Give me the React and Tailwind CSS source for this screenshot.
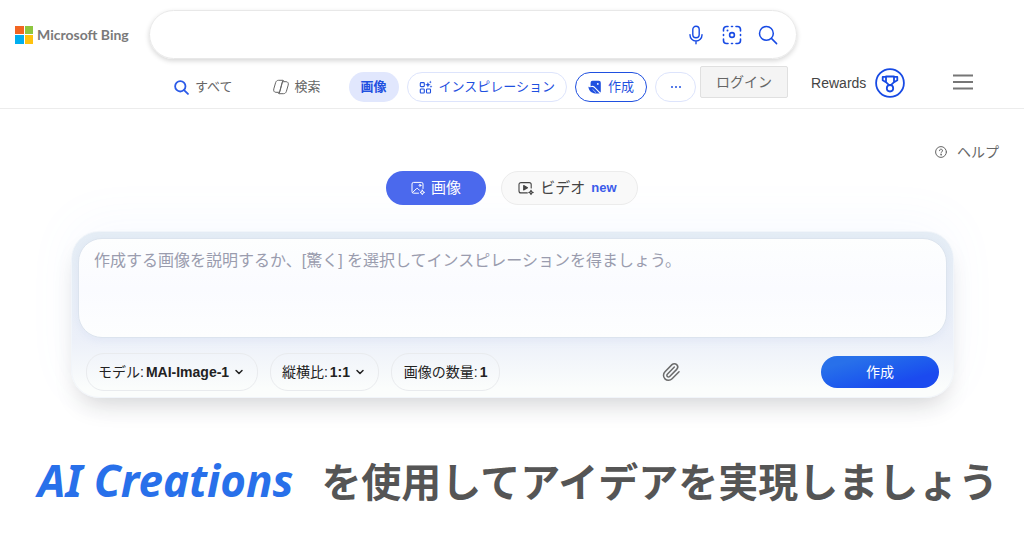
import React from 'react';
import { ChevronDown, Paperclip } from 'lucide-react';

const SearchIcon = ({ className, strokeWidth }) => (
  <svg className={className} viewBox="0 0 20 20" fill="none" stroke="currentColor" strokeWidth={strokeWidth} strokeLinecap="round">
    <circle cx="8.4" cy="8.4" r="6.9" />
    <path d="M13.4 13.4l5.2 5.2" />
  </svg>
);

const MicIcon = () => (
  <svg className="w-5 h-5" viewBox="0 0 20 20" fill="none" stroke="currentColor" strokeWidth="1.4" strokeLinecap="round">
    <rect x="6.8" y="1.2" width="6.4" height="11.6" rx="3.2" />
    <path d="M4 9.6v.4a6 6 0 0 0 12 0v-.4M10 16v2.8" />
  </svg>
);

const LensIcon = () => (
  <svg className="w-5 h-5" viewBox="0 0 20 20" fill="none" stroke="currentColor" strokeWidth="1.6" strokeLinecap="round">
    <path d="M1.5 6V4.5a3 3 0 0 1 3-3H6M14 1.5h1.5a3 3 0 0 1 3 3V6M18.5 14v1.5a3 3 0 0 1-3 3H14M6 18.5H4.5a3 3 0 0 1-3-3V14" />
    <path d="M9.5 1.5h1M1.5 9.5v1M18.5 9.5v1M9.5 18.5h1" />
    <circle cx="10" cy="10" r="2.4" />
    <circle cx="5.5" cy="5.5" r="1" fill="currentColor" stroke="none" />
  </svg>
);

const CopilotIcon = () => (
  <svg className="w-4 h-4" viewBox="0 0 16 16" fill="none" stroke="currentColor" strokeWidth="1" strokeLinejoin="round">
    <path d="M5.6 1.3h4.2L7 11.8c-.3 1-.9 1.5-1.8 1.5H2.9C1 13.3.3 11.7.8 9.9l1.8-6.2c.5-1.6 1.5-2.4 3-2.4z" />
    <path d="M10.4 14.7H6.2L9 4.2c.3-1 .9-1.5 1.8-1.5h2.3c1.9 0 2.6 1.6 2.1 3.4l-1.8 6.2c-.5 1.6-1.5 2.4-3 2.4z" />
    <path d="M9.8 1.3c.8 0 1 .6 1.2 1.4M6.2 14.7c-.8 0-1-.6-1.2-1.4" />
  </svg>
);

const InspirationIcon = () => (
  <svg className="w-3.5 h-3.5" viewBox="0 0 14 14" fill="none" stroke="currentColor" strokeWidth="1.1">
    <rect x="1.3" y="2.6" width="4" height="4" rx=".8" />
    <rect x="1.3" y="9" width="4" height="4" rx=".8" />
    <rect x="7.5" y="9" width="4" height="4" rx=".8" />
    <path d="M8.9 2l.8 2 2 .8-2 .8-.8 2-.8-2-2-.8 2-.8z" fill="currentColor" stroke="none" />
    <path d="M11.3.6l.4 1.1 1.1.4-1.1.4-.4 1.1-.4-1.1-1.1-.4 1.1-.4zM12 5.2l.4 1 1 .4-1 .4-.4 1-.4-1-1-.4 1-.4z" fill="currentColor" stroke="none" />
  </svg>
);

const CreateIcon = () => (
  <svg className="w-3.5 h-3.5" viewBox="0 0 14 14" fill="currentColor">
    <path d="M4.5.8h6.4a1.9 1.9 0 0 1 1.9 1.9v8.6a1.9 1.9 0 0 1-.4 1.2L7.4 7.6A3.6 3.6 0 0 0 2.6 6.4V2.7A1.9 1.9 0 0 1 4.5.8z" />
    <path d="M.4 6.6c.8 1 1.5.6 2.7.4 1.6-.2 2.600.3 3.600 1.300l5 5.200H7.200C3.600 13.200.6 10.800.4 6.600z" />
    <circle cx="9.8" cy="3.9" r=".9" fill="white" />
    <path d="M4.6 9.4l3.400 3.300" stroke="white" strokeWidth=".6" fill="none" />
  </svg>
);

const TrophyIcon = () => (
  <svg className="w-[30px] h-[30px]" viewBox="0 0 30 30" fill="none" stroke="#174ae4" strokeWidth="1.8" strokeLinejoin="round">
    <circle cx="15" cy="15" r="13.9" />
    <path d="M11 8.5h8v5.7l-2.8 2.6h-2.4L11 14.2z" />
    <path d="M11 8.9H7.7v3.3l3.3 2M19 8.9h3.3v3.3l-3.3 2" />
    <circle cx="15" cy="20.3" r="3.2" />
  </svg>
);

const ImageTabIcon = () => (
  <svg className="w-3.5 h-3.5" viewBox="0 0 14 14" fill="none" stroke="currentColor" strokeWidth="1" strokeLinecap="round" strokeLinejoin="round">
    <path d="M12 7.5V3a1.6 1.6 0 0 0-1.6-1.6H2.6A1.6 1.6 0 0 0 1 3v7.6a1.6 1.6 0 0 0 1.6 1.6h4.9M1.6 11.5l3.7-3.7a1.2 1.2 0 0 1 1.7 0l1.5 1.5" />
    <circle cx="9" cy="4.4" r=".9" />
    <path d="M11.3 9.1l.7 1.6 1.6.7-1.6.7-.7 1.6-.7-1.6-1.6-.7 1.6-.7z" />
  </svg>
);

const VideoTabIcon = () => (
  <svg className="w-4 h-4" viewBox="0 0 16 16" fill="none" stroke="currentColor" strokeWidth="1.1" strokeLinecap="round" strokeLinejoin="round">
    <path d="M13.2 8V4.6a2 2 0 0 0-2-2H3a2 2 0 0 0-2 2v6.3a2 2 0 0 0 2 2h6.3" />
    <path d="M5.7 5.5v4.4l3.8-2.2z" fill="currentColor" />
    <path d="M13 10.2l.7 1.5 1.5.7-1.5.7-.7 1.5-.7-1.5-1.5-.7 1.5-.7z" />
  </svg>
);

const HelpIcon = () => (
  <svg className="w-3 h-3" viewBox="0 0 12 12" fill="none" stroke="currentColor" strokeLinecap="round">
    <circle cx="6" cy="6" r="5.4" />
    <path d="M4.5 4.7a1.5 1.5 0 1 1 2.3 1.2c-.5.4-.8.6-.8 1.2" />
    <circle cx="6" cy="8.8" r=".3" fill="currentColor" />
  </svg>
);

const MenuIcon = () => (
  <svg className="w-5 h-4" viewBox="0 0 20 16" stroke="currentColor" strokeWidth="1.8">
    <path d="M0 1.5h20M0 8h20M0 14.5h20" />
  </svg>
);

const SelectPill = ({ id, label, value }) => (
  <div className="relative flex items-center h-[38px] px-[11px] rounded-[18px] border border-[#e9ebee] text-sm text-[#222]">
    <label htmlFor={id} className="whitespace-nowrap">{label}:</label>
    <select id={id} defaultValue={value} className="appearance-none bg-transparent font-bold pl-0.5 pr-4 outline-none">
      <option>{value}</option>
    </select>
    <ChevronDown className="absolute right-3 w-3 h-3 pointer-events-none" strokeWidth={3} />
  </div>
);

const Header = () => (
  <header className="h-[109px] border-b border-[#ececec] pt-2.5">
    <div className="flex items-center pl-[15px] pr-4">
      <a href="#" className="flex items-center gap-1 w-[134px] shrink-0">
        <span className="grid grid-cols-2 gap-px w-[18px] h-[18px]">
          <span className="bg-[#f26522]"></span>
          <span className="bg-[#8dc63f]"></span>
          <span className="bg-[#00aeef]"></span>
          <span className="bg-[#ffc20e]"></span>
        </span>
        <span className="font-['Lato',sans-serif] text-sm font-bold text-[#7a7a7a] whitespace-nowrap">Microsoft Bing</span>
      </a>
      <form className="flex items-center flex-1 max-w-[648px] h-[49px] pr-[18px] rounded-full border border-[#e8e8e8] shadow-[0_2px_5px_rgba(0,0,0,0.16)] text-[#174ae4]">
        <input type="search" aria-label="検索" className="flex-1 min-w-0 h-full pl-6 bg-transparent outline-none text-base text-[#444]" />
        <div className="flex items-center gap-4">
          <button type="button" aria-label="音声検索"><MicIcon /></button>
          <button type="button" aria-label="画像検索"><LensIcon /></button>
          <button type="submit" aria-label="検索を実行"><SearchIcon className="w-5 h-5" strokeWidth={1.5} /></button>
        </div>
      </form>
    </div>

    <div className="flex items-start pl-[174px] pt-[7px]">
      <nav className="flex items-center h-[30px] mt-1.5 gap-2 text-[13px] text-[#1f50e0] whitespace-nowrap">
        <a href="#" className="flex items-center gap-1.5 mr-8 text-[#666]">
          <SearchIcon className="w-[15px] h-[15px] text-[#2b5ae8]" strokeWidth={2.4} />
          すべて
        </a>
        <a href="#" className="flex items-center gap-1.5 mr-5 text-[#666]">
          <CopilotIcon />
          検索
        </a>
        <a href="#" className="flex items-center h-full px-3 rounded-full bg-[#e1e7fd] font-bold">画像</a>
        <a href="#" className="flex items-center gap-1.5 h-full px-[11px] rounded-full border border-[#dde4fc]">
          <InspirationIcon />
          インスピレーション
        </a>
        <a href="#" className="flex items-center gap-1.5 h-full px-3 rounded-full border border-[#1f50e0]">
          <CreateIcon />
          作成
        </a>
        <button aria-label="その他" className="flex items-center justify-center gap-0.5 w-[41px] h-full rounded-full border border-[#dde4fc]">
          <span className="w-0.5 h-0.5 rounded-full bg-current"></span>
          <span className="w-0.5 h-0.5 rounded-full bg-current"></span>
          <span className="w-0.5 h-0.5 rounded-full bg-current"></span>
        </button>
      </nav>
      <button className="h-8 px-[15px] ml-1 rounded-xs border border-[#e0e0e0] bg-[#f4f4f4] text-sm text-[#666]">ログイン</button>
      <a href="#" className="flex items-center gap-[9px] ml-[23px] mt-0.5 text-sm text-[#444]">
        Rewards
        <TrophyIcon />
      </a>
      <button aria-label="設定" className="ml-12 mt-2 text-[#767676]">
        <MenuIcon />
      </button>
    </div>
  </header>
);

const PromptCard = () => (
  <section className="p-1.5 rounded-[28px] border border-[#f1f5fa] bg-linear-to-b from-[#e5edf5] via-[#ecf0f9] via-65% to-[#fbfdfc] to-95% shadow-[0_14px_24px_-8px_rgba(0,0,0,0.17),0_-10px_50px_rgba(110,150,255,0.05)]">
    <textarea
      aria-label="プロンプト"
      placeholder="作成する画像を説明するか、[驚く] を選択してインスピレーションを得ましょう。"
      className="block w-full h-[100px] px-[15px] py-2.5 rounded-[24px] border border-[#dce4ee] bg-linear-to-b from-[#fdfefe] via-[#fafbff] to-[#fdfefe] resize-none outline-none text-base leading-6 placeholder:text-[#9a9cae] shadow-[0_2px_8px_rgba(150,170,220,0.12)]"
    />
    <div className="flex items-center gap-3 mt-[15px] px-2">
      <SelectPill id="model" label="モデル" value="MAI-Image-1" />
      <SelectPill id="ratio" label="縦横比" value="1:1" />
      <button className="flex items-center gap-0.5 h-[38px] px-3 rounded-[18px] border border-[#e9ebee] text-sm text-[#222] whitespace-nowrap">
        画像の数量:
        <b>1</b>
      </button>
      <button aria-label="画像を添付" className="ml-auto mr-32 text-[#6b6b6b]">
        <Paperclip className="w-5 h-5" strokeWidth={1.8} />
      </button>
      <button className="w-[118px] h-8 rounded-full bg-linear-to-br from-[#2870ea] from-20% to-[#1b4aef] to-75% text-sm text-white">作成</button>
    </div>
  </section>
);

function App() {
  return (
    <div className="min-h-screen bg-white overflow-x-hidden font-['Liberation_Sans','Noto_Sans_CJK_JP',sans-serif]">
      <Header />
      <main>
        <div className="flex justify-end pt-[33px] pr-[25px]">
          <a href="#" className="flex items-center gap-2.5 text-sm text-[#666]">
            <HelpIcon />
            ヘルプ
          </a>
        </div>

        <div className="flex justify-center gap-[15px] mt-[9px] text-[15px]">
          <button className="flex items-center justify-center gap-1.5 w-[100px] h-[34px] rounded-full bg-[#4b69ed] text-white">
            <ImageTabIcon />
            画像
          </button>
          <button className="flex items-center justify-center gap-1.5 w-[137px] h-[34px] pr-1 rounded-full border border-[#ececec] bg-[#f9f9f9] text-[#444]">
            <VideoTabIcon />
            ビデオ
            <span className="text-[13px] font-bold text-[#3b5bea]">new</span>
          </button>
        </div>

        <div className="mt-[26px] pl-[71px] pr-[70px]">
          <PromptCard />
        </div>

        <h1 className="mt-[52px] pl-3 text-center text-[40px] leading-[60px] font-bold text-[#555] whitespace-nowrap">
          <em className="mr-7 font-['Noto_Sans',sans-serif] text-[44px] text-[#2870ea]">AI Creations</em>
          を使用してアイデアを実現しましょう
        </h1>
      </main>
    </div>
  );
}

export default App;
